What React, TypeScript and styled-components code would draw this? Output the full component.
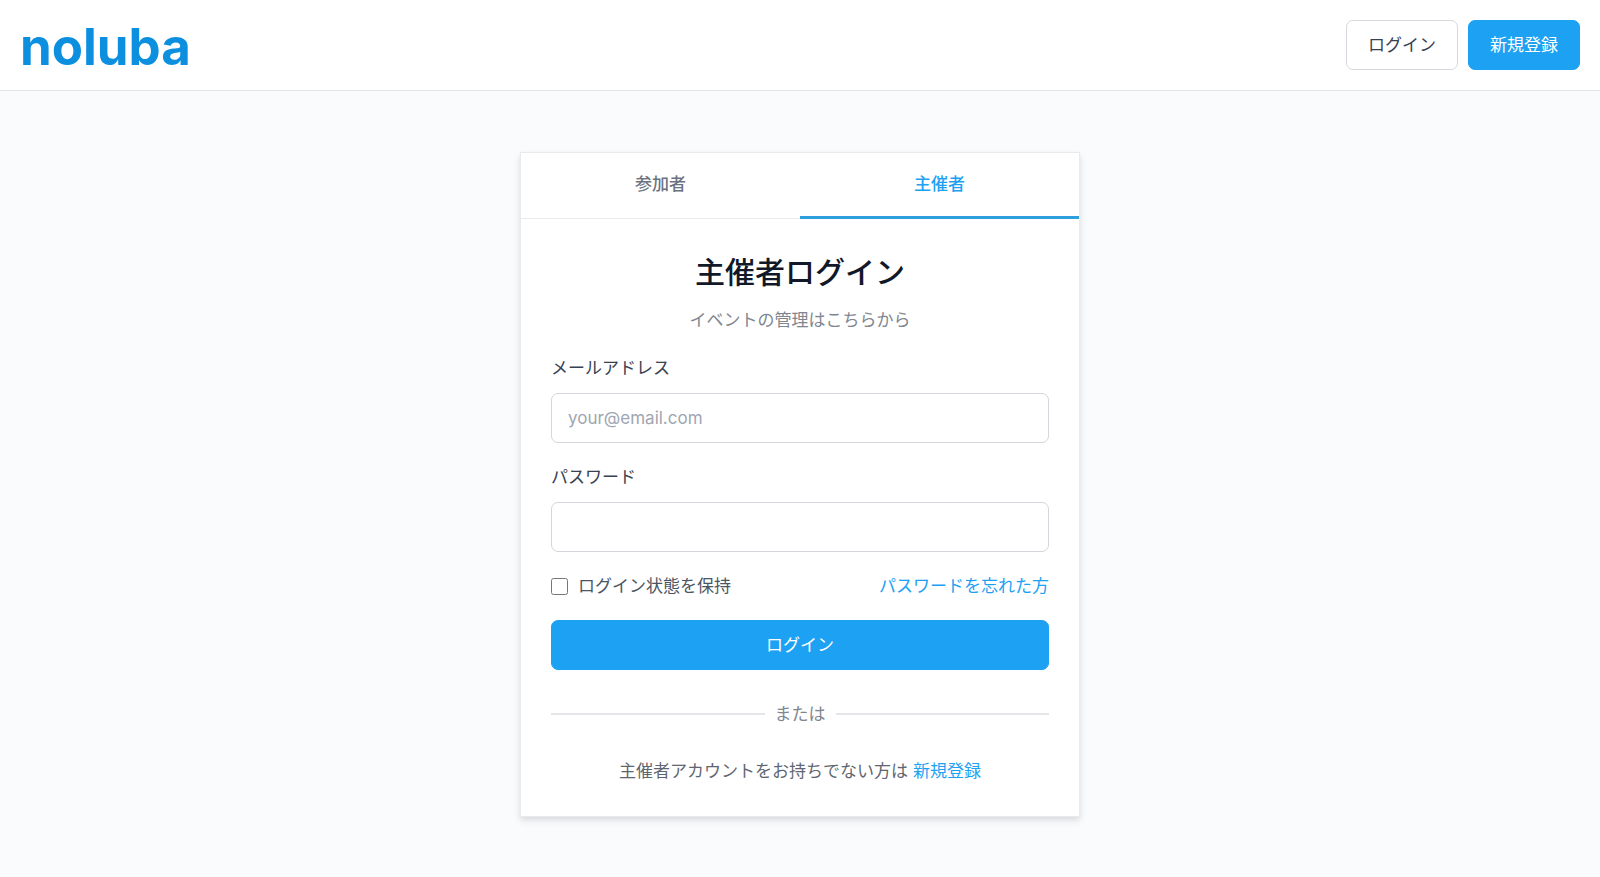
import React from "react";
import styled, { createGlobalStyle, css } from "styled-components";

const GlobalStyle = createGlobalStyle`
  *, *::before, *::after { box-sizing: border-box; }
  body {
    margin: 0;
    min-height: 100vh;
    background: #f9fbfc;
    color: #374151;
    font-family: Inter, "Noto Sans CJK JP", sans-serif;
    font-size: 17px;
    line-height: 26px;
  }
  button, input { font: inherit; color: inherit; }
`;

const Header = styled.header`
  display: flex;
  align-items: center;
  justify-content: space-between;
  padding: 20px;
  background: #fff;
  border-bottom: 1px solid #e2e6e9;
`;

const Logo = styled.a`
  padding-top: 4px;
  color: #0d8fe0;
  font-size: 51px;
  font-weight: 700;
  line-height: 46px;
  text-decoration: none;
`;

const HeaderActions = styled.nav`
  display: flex;
  gap: 10px;
`;

const Button = styled.button<{ $variant?: "primary" | "outline" }>`
  height: 50px;
  padding: 0 21px;
  border: 1px solid #1da1f2;
  border-radius: 7px;
  background: #1da1f2;
  color: #fff;
  cursor: pointer;
  ${({ $variant }) =>
    $variant === "outline" &&
    css`
      border-color: #d5d8dc;
      background: #fff;
      color: #374151;
    `}
`;

const Main = styled.main`
  display: flex;
  justify-content: center;
  padding: 61px 20px 60px;
`;

const Card = styled.section`
  width: 100%;
  max-width: 560px;
  border: 1px solid #e8eaed;
  background: #fff;
  box-shadow: 0 4px 8px rgba(0, 0, 0, 0.09), 0 2px 4px rgba(0, 0, 0, 0.05);
`;

const Tabs = styled.div`
  display: flex;
  box-shadow: inset 0 -1px #e8eaed;
`;

const Tab = styled.button<{ $active?: boolean }>`
  flex: 1;
  height: 66px;
  padding: 0 0 2px;
  border: 0;
  border-bottom: 3px solid ${({ $active }) => ($active ? "#2f9fe0" : "transparent")};
  background: none;
  color: ${({ $active }) => ($active ? "#1da1f2" : "#6b7280")};
  font-weight: 500;
  cursor: pointer;
`;

const Body = styled.div`
  padding: 32px 30px;
`;

const Title = styled.h1`
  margin: 0 0 14px;
  color: #111827;
  font-size: 30px;
  font-weight: 500;
  line-height: 42px;
  text-align: center;
`;

const Subtitle = styled.p`
  margin: 0 0 22px;
  color: #808690;
  text-align: center;
`;

const Form = styled.form`
  display: flex;
  flex-direction: column;
  gap: 21px;
`;

const Field = styled.div`
  display: flex;
  flex-direction: column;
  gap: 12px;
`;

const Label = styled.label`
  color: #374151;
`;

const Input = styled.input`
  width: 100%;
  height: 50px;
  padding: 0 16px;
  border: 1px solid #d3d6da;
  border-radius: 7px;
  background: #fff;
  &::placeholder { color: #a0a6b1; opacity: 1; }
`;

const Options = styled.div`
  display: flex;
  align-items: center;
  justify-content: space-between;
`;

const Remember = styled.label`
  display: flex;
  align-items: center;
  gap: 10px;
  color: #4b5563;
`;

const Checkbox = styled.input`
  width: 17px;
  height: 17px;
  margin: 0;
`;

const Link = styled.a`
  color: #1da1f2;
  text-decoration: none;
`;

const Divider = styled.div`
  display: flex;
  align-items: center;
  gap: 10px;
  margin: 31px 0;
  color: #808690;
  &::before, &::after {
    content: "";
    flex: 1;
    height: 2px;
    background: #e3e5e8;
  }
`;

const SignUp = styled.p`
  margin: 0;
  color: #5f6671;
  text-align: center;
`;

export default function App() {
  return (
    <>
      <GlobalStyle />
      <Header>
        <Logo href="#">noluba</Logo>
        <HeaderActions>
          <Button type="button" $variant="outline">ログイン</Button>
          <Button type="button">新規登録</Button>
        </HeaderActions>
      </Header>
      <Main>
        <Card>
          <Tabs role="tablist">
            <Tab type="button" role="tab" aria-selected={false}>参加者</Tab>
            <Tab type="button" role="tab" aria-selected $active>主催者</Tab>
          </Tabs>
          <Body>
            <Title>主催者ログイン</Title>
            <Subtitle>イベントの管理はこちらから</Subtitle>
            <Form onSubmit={(e) => e.preventDefault()}>
              <Field>
                <Label htmlFor="email">メールアドレス</Label>
                <Input id="email" type="email" placeholder="your@email.com" />
              </Field>
              <Field>
                <Label htmlFor="password">パスワード</Label>
                <Input id="password" type="password" />
              </Field>
              <Options>
                <Remember>
                  <Checkbox type="checkbox" />
                  ログイン状態を保持
                </Remember>
                <Link href="#">パスワードを忘れた方</Link>
              </Options>
              <Button type="submit">ログイン</Button>
            </Form>
            <Divider>または</Divider>
            <SignUp>
              主催者アカウントをお持ちでない方は <Link href="#">新規登録</Link>
            </SignUp>
          </Body>
        </Card>
      </Main>
    </>
  );
}
